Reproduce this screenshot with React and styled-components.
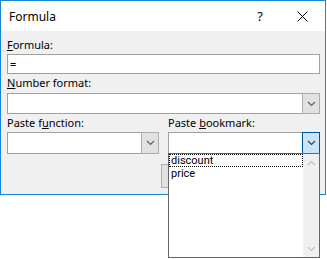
import React from 'react';
import styled, { createGlobalStyle } from 'styled-components';

const GlobalStyle = createGlobalStyle`
  html, body {
    margin: 0;
    padding: 0;
    background: #ffffff;
    min-height: 100%;
  }
  html {
    height: 100%;
  }
  body {
    height: 100%;
    font-family: "Segoe UI", "Noto Sans", sans-serif;
    font-size: 11px;
    color: #000000;
  }
  #root {
    min-height: 259px;
  }
  * {
    box-sizing: border-box;
  }
`;

const Window = styled.div`
  width: 326px;
  border: 1px solid #1883d7;
  background: #f0f0f0;
  position: relative;
`;

const TitleBar = styled.div`
  height: 30px;
  background: #ffffff;
  display: flex;
  align-items: center;
  padding-left: 8px;
`;

const Title = styled.div`
  flex: 1;
  font-size: 12px;
  line-height: 16px;
  padding-top: 1px;
`;

const HelpGlyph = styled.div`
  width: 14px;
  font-size: 13px;
  line-height: 16px;
  margin-right: 12px;
  text-align: center;
`;

const CloseButton = styled.div`
  width: 46px;
  height: 30px;
  display: flex;
  align-items: center;
  justify-content: center;
`;

const Body = styled.div`
  padding: 7px 5px 6px 6px;
  display: flex;
  flex-direction: column;
`;

const Label = styled.div`
  height: 14px;
  line-height: 14px;
  margin-bottom: ${(p) => p.$gap}px;
  margin-top: ${(p) => p.$top || 0}px;
  white-space: nowrap;
`;

const Key = styled.span`
  text-decoration: underline;
  text-underline-offset: 1px;
`;

const TextBox = styled.div`
  height: 20px;
  background: #ffffff;
  border: 1px solid #a0a0a0;
  padding-left: 2px;
  line-height: 17px;
`;

const Columns = styled.div`
  display: grid;
  grid-template-columns: 152px 152px;
  column-gap: 9px;
`;

const Column = styled.div`
  display: flex;
  flex-direction: column;
  position: relative;
`;

const Combo = styled.div`
  display: flex;
  height: ${(p) => p.$h}px;
  position: relative;
`;

const ComboField = styled.div`
  flex: 1;
  background: #ffffff;
  border: 1px solid #a0a0a0;
  border-right: none;
`;

const ComboButton = styled.div`
  width: 18px;
  display: flex;
  align-items: center;
  justify-content: center;
  background: ${(p) => (p.$open ? '#cce4f7' : '#e1e1e1')};
  border: 1px solid ${(p) => (p.$open ? '#005499' : '#adadad')};
`;

// OK / Cancel sit behind the open list; only the edge of OK shows
const ButtonRow = styled.div`
  margin-top: 10px;
  display: flex;
  justify-content: flex-end;
  gap: 9px;
`;

const PushButton = styled.div`
  width: 75px;
  height: 24px;
  background: #e1e1e1;
  border: 1px solid #adadad;
`;

const DropList = styled.div`
  position: absolute;
  left: 0;
  top: 21px;
  width: 152px;
  height: 105px;
  background: #ffffff;
  border: 1px solid #646464;
  display: flex;
  z-index: 5;
`;

const Items = styled.div`
  flex: 1;
  display: flex;
  flex-direction: column;
`;

const Item = styled.div`
  height: 13px;
  line-height: 13px;
  padding-left: 2px;
  font-family: Roboto, "Noto Sans", sans-serif;
  font-size: 11px;
  outline: ${(p) => (p.$focus ? '1px dotted #000000' : 'none')};
  outline-offset: -1px;
`;

const ScrollBar = styled.div`
  width: 16px;
  background: #f0f0f0;
  display: flex;
  flex-direction: column;
  justify-content: space-between;
`;

const ScrollArrow = styled.div`
  height: 17px;
  display: flex;
  align-items: center;
  justify-content: center;
`;

const Chevron = ({ up, color = '#606060' }) => (
  <svg width="9" height="6" viewBox="0 0 9 6">
    <polyline
      points={up ? '1,5 4.5,1.5 8,5' : '1,1 4.5,4.5 8,1'}
      fill="none"
      stroke={color}
      strokeWidth="1.2"
    />
  </svg>
);

const CloseIcon = () => (
  <svg width="11" height="11" viewBox="0 0 11 11">
    <path d="M0.5 0.5 L10.5 10.5 M10.5 0.5 L0.5 10.5" stroke="#000000" strokeWidth="1" fill="none" />
  </svg>
);

export default function App() {
  return (
    <>
      <GlobalStyle />
      <Window>
        <TitleBar>
          <Title>Formula</Title>
          <HelpGlyph>?</HelpGlyph>
          <CloseButton>
            <CloseIcon />
          </CloseButton>
        </TitleBar>
        <Body>
          <Label $gap={2}>
            <Key>F</Key>ormula:
          </Label>
          <TextBox>=</TextBox>

          <Label $top={2} $gap={3}>
            <Key>N</Key>umber format:
          </Label>
          <Combo $h={21}>
            <ComboField />
            <ComboButton>
              <Chevron />
            </ComboButton>
          </Combo>

          <Columns>
            <Column>
              <Label $top={2} $gap={2}>
                Paste f<Key>u</Key>nction:
              </Label>
              <Combo $h={22}>
                <ComboField />
                <ComboButton>
                  <Chevron />
                </ComboButton>
              </Combo>
            </Column>
            <Column>
              <Label $top={2} $gap={2}>
                Paste <Key>b</Key>ookmark:
              </Label>
              <Combo $h={22}>
                <ComboField />
                <ComboButton $open>
                  <Chevron color="#404040" />
                </ComboButton>
                <DropList>
                  <Items>
                    <Item $focus>discount</Item>
                    <Item>price</Item>
                  </Items>
                  <ScrollBar>
                    <ScrollArrow>
                      <Chevron up color="#c0c0c0" />
                    </ScrollArrow>
                    <ScrollArrow>
                      <Chevron color="#c0c0c0" />
                    </ScrollArrow>
                  </ScrollBar>
                </DropList>
              </Combo>
            </Column>
          </Columns>

          <ButtonRow>
            <PushButton />
            <PushButton />
          </ButtonRow>
        </Body>
      </Window>
    </>
  );
}
